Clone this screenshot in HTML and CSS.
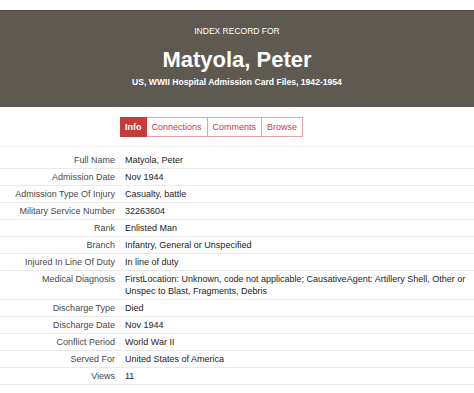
FILE: index.html
```html
<!DOCTYPE html>
<html lang="en">
<head>
    <meta charset="UTF-8">
    <meta name="viewport" content="width=device-width, initial-scale=1.0">
    <title>Matyola, Peter</title>
    <link rel="stylesheet" href="styles.css">
</head>
<body>
    <header class="record-header">
        <div class="eyebrow">INDEX RECORD FOR</div>
        <h1>Matyola, Peter</h1>
        <div class="collection">US, WWII Hospital Admission Card Files, 1942-1954</div>
    </header>

    <nav class="tabs">
        <a href="#" class="tab active">Info</a>
        <a href="#" class="tab">Connections</a>
        <a href="#" class="tab">Comments</a>
        <a href="#" class="tab">Browse</a>
    </nav>

    <table class="record">
        <tr><th>Full Name</th><td>Matyola, Peter</td></tr>
        <tr><th>Admission Date</th><td>Nov 1944</td></tr>
        <tr><th>Admission Type Of Injury</th><td>Casualty, battle</td></tr>
        <tr><th>Military Service Number</th><td>32263604</td></tr>
        <tr><th>Rank</th><td>Enlisted Man</td></tr>
        <tr><th>Branch</th><td>Infantry, General or Unspecified</td></tr>
        <tr><th>Injured In Line Of Duty</th><td>In line of duty</td></tr>
        <tr><th>Medical Diagnosis</th><td>FirstLocation: Unknown, code not applicable; CausativeAgent: Artillery Shell, Other or Unspec to Blast, Fragments, Debris</td></tr>
        <tr><th>Discharge Type</th><td>Died</td></tr>
        <tr><th>Discharge Date</th><td>Nov 1944</td></tr>
        <tr><th>Conflict Period</th><td>World War II</td></tr>
        <tr><th>Served For</th><td>United States of America</td></tr>
        <tr><th>Views</th><td>11</td></tr>
    </table>
</body>
</html>
```

FILE: styles.css
```css
:root {
    --header-bg: #5e5a52;
    --tab-red: #c43c3c;
    --tab-border: #e2a4a2;
    --line: #e9e9e9;
}

body {
    font-family: "Liberation Sans", Arial, sans-serif;
    margin: 0;
    padding: 10px 0 0;
    background: #fff;
    color: #222;
}

.record-header {
    background: var(--header-bg);
    border-top: 1px solid #4b4741;
    color: #fff;
    text-align: center;
    padding: 14px 0 19px;
}

.eyebrow {
    font-size: 8.5px;
    line-height: 12px;
}

.record-header h1 {
    margin: 10px 0 3px;
    font-size: 22px;
    line-height: 26px;
    font-weight: bold;
}

.collection {
    font-size: 8.6px;
    line-height: 12px;
    font-weight: bold;
}

.tabs {
    display: flex;
    padding: 10px 0 9px 120px;
    border-bottom: 1px solid #efefef;
}

.tab {
    font-size: 9px;
    line-height: 18px;
    padding: 0 5px;
    color: var(--tab-red);
    text-decoration: none;
    border: 1px solid var(--tab-border);
    border-left: none;
}

.tab:first-child {
    border-left: 1px solid var(--tab-border);
}

.tab.active {
    padding: 0 4px;
    background: var(--tab-red);
    border-color: var(--tab-red);
    color: #fff;
    font-weight: bold;
}

.record {
    width: 100%;
    border-collapse: collapse;
    margin-top: 4px;
    font-size: 9px;
    line-height: 12px;
}

.record th,
.record td {
    padding: 2px 0;
    border-bottom: 1px solid var(--line);
    vertical-align: top;
}

.record th {
    width: 115px;
    text-align: right;
    font-weight: normal;
    color: #484848;
    white-space: nowrap;
}

.record td {
    padding-left: 10px;
    padding-right: 2px;
    color: #222;
}

.record tr:first-child th,
.record tr:first-child td {
    padding-top: 3px;
}
```
